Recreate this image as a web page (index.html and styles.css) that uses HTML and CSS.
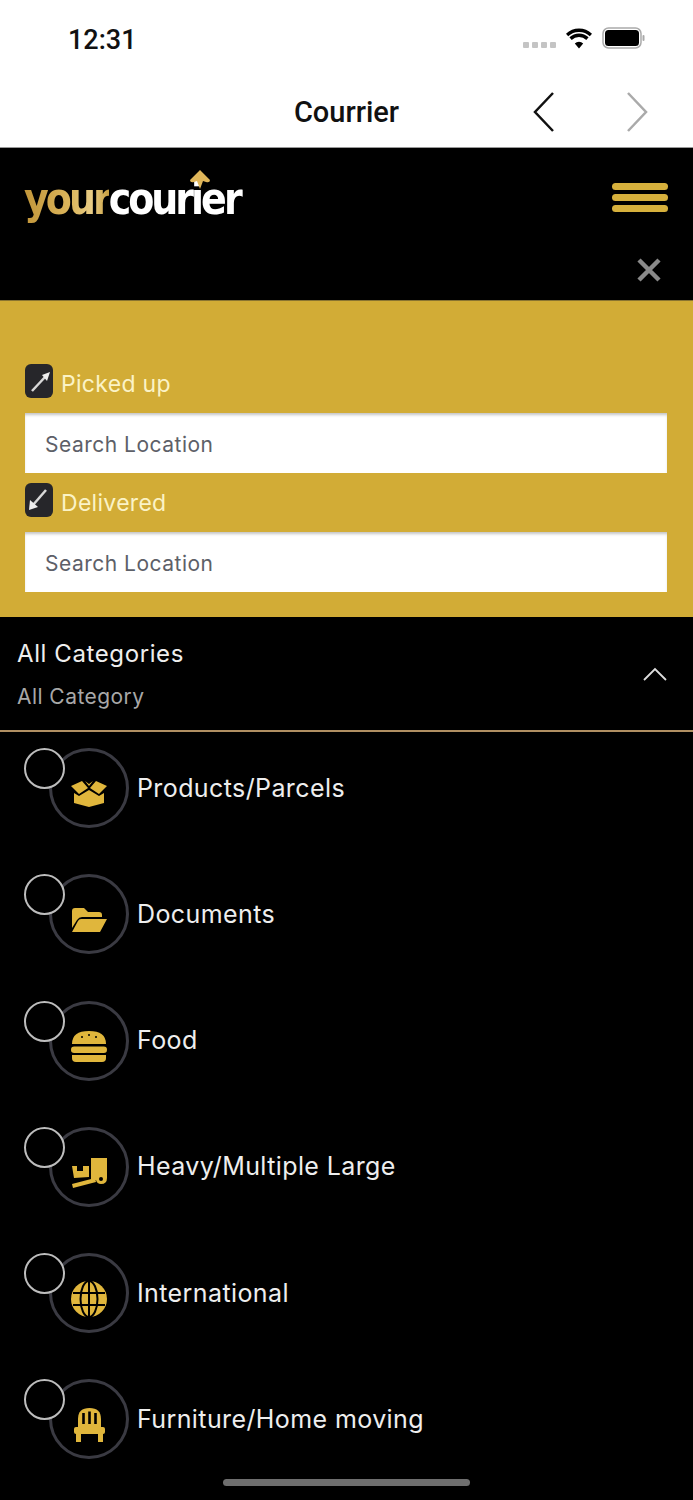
FILE: index.html
```html
<!DOCTYPE html>
<html lang="en">
<head>
<meta charset="utf-8">
<title>Courrier</title>
<link rel="stylesheet" href="styles.css">
</head>
<body>
<div class="screen">
  <header class="top">
    <div class="status">
      <span class="time">12:31</span>
      <div class="status-icons">
        <span class="signal"><i></i><i></i><i></i><i></i></span>
        <svg class="wifi" viewBox="0 0 28 20"><path d="M14 20l-4.2-5a6 6 0 0 1 8.4 0zM14 8.5a10.500 10.500 0 0 0-7.300 3l-2.300-2.700a14 14 0 0 1 19.200 0l-2.300 2.700a10.500 10.500 0 0 0-7.300-3zM14 3.500a15.500 15.500 0 0 0-10.800 4.300L1 5.200a19 19 0 0 1 26 0l-2.200 2.600A15.500 15.500 0 0 0 14 3.500z"/></svg>
        <svg class="battery" viewBox="0 0 44 22"><rect x="1" y="1" width="38" height="20" rx="5.500" fill="none" stroke="#aaa" stroke-width="1.500"/><rect x="3" y="3" width="34" height="16" rx="3.500" fill="#000"/><rect x="40.500" y="8" width="2" height="6" rx="1" fill="#aaa"/></svg>
      </div>
    </div>
    <nav class="navbar">
      <span class="nav-title">Courrier</span>
      <div class="nav-arrows">
        <svg class="chev" viewBox="0 0 24 42"><path d="M21 2L3 21l18 19" fill="none" stroke="#111" stroke-width="2.500"/></svg>
        <svg class="chev" viewBox="0 0 24 42"><path d="M3 2l18 19L3 40" fill="none" stroke="#aaa" stroke-width="2.500"/></svg>
      </div>
    </nav>
  </header>

  <section class="brand">
    <div class="brand-row">
      <div class="logo">
        <span class="logo-text"><span class="logo-gold">your</span><span class="logo-white">courier</span></span>
        <svg class="logo-arrow" viewBox="0 0 22 20"><path d="M11 0l10 10q0 3-4 2l-3-1-3 8-3-8-3 1q-4 1-4-2z"/></svg>
      </div>
      <div class="burger"><i></i><i></i><i></i></div>
    </div>
    <div class="close-row">
      <svg class="close" viewBox="0 0 24 24"><path d="M2 2l20 20M22 2L2 22" stroke="#8a8a8a" stroke-width="4.500" fill="none"/></svg>
    </div>
  </section>

  <section class="search">
    <div class="label-row">
      <span class="tag"><svg viewBox="0 0 28 34"><path d="M7 27L21 12" stroke="#d8d8d8" stroke-width="2.500" fill="none"/><path d="M25 8l-8 3 5 6z" fill="#eee"/></svg></span>
      <span class="label">Picked up</span>
    </div>
    <input class="field" type="text" placeholder="Search Location">
    <div class="label-row">
      <span class="tag"><svg viewBox="0 0 28 34"><path d="M21 7L8 22" stroke="#d8d8d8" stroke-width="2.500" fill="none"/><path d="M4 27l1-10 8 7z" fill="#eee"/></svg></span>
      <span class="label">Delivered</span>
    </div>
    <input class="field" type="text" placeholder="Search Location">
  </section>

  <section class="cats">
    <div class="cats-head">
      <div>
        <div class="cats-title">All Categories</div>
        <div class="cats-sub">All Category</div>
      </div>
      <svg class="cats-chev" viewBox="0 0 24 14"><path d="M1 13L12 2l11 11" fill="none" stroke="#ddd" stroke-width="1.800"/></svg>
    </div>
    <ul class="cat-list">
      <li class="cat">
        <span class="check"></span>
        <span class="disc"><svg viewBox="0 0 36 36"><path d="M0 10l11-5 6 7-9 6zM36 10L25 5l-6 7 9 6zM14 5l4 3 4-3-4 5z"/><path d="M3 17l5 3 10-6 10 6 5-3v10l-15 4-15-4z"/></svg></span>
        <span class="cat-name">Products/Parcels</span>
      </li>
      <li class="cat">
        <span class="check"></span>
        <span class="disc"><svg viewBox="0 0 36 36"><path d="M1 9q0-3 3-3h9l4 4h11q3 0 3 3v2H11q-3 0-5 3l-5 8z"/><path d="M10 17h26l-7 13H1l6-11q1-2 3-2z"/></svg></span>
        <span class="cat-name">Documents</span>
      </li>
      <li class="cat">
        <span class="check"></span>
        <span class="disc"><svg viewBox="0 0 36 36"><path d="M1 16Q1 3 18 3t17 13z"/><rect x="0" y="18.500" width="36" height="6.500" rx="3.200"/><path d="M1 27h34v3q0 4-4 4H5q-4 0-4-4z"/><circle cx="11" cy="9" r="1" class="hole"/><circle cx="18" cy="7" r="1" class="hole"/><circle cx="25" cy="9" r="1" class="hole"/></svg></span>
        <span class="cat-name">Food</span>
      </li>
      <li class="cat">
        <span class="check"></span>
        <span class="disc"><svg viewBox="0 0 36 36"><path d="M20 4h16v20q0 6-6 6-4 0-5-4l-5 1z"/><circle cx="30" cy="25" r="2" class="hole"/><path d="M1 12h5v5h6v-5h6v11l-15 1z"/><path d="M1 30l23-6 1 4-23 6z"/></svg></span>
        <span class="cat-name">Heavy/Multiple Large</span>
      </li>
      <li class="cat">
        <span class="check"></span>
        <span class="disc"><svg viewBox="0 0 36 36"><circle cx="18" cy="18" r="18"/><g class="lines"><ellipse cx="18" cy="18" rx="8.500" ry="18"/><path d="M18 0v36M2 12h32M2 24h32"/></g></svg></span>
        <span class="cat-name">International</span>
      </li>
      <li class="cat">
        <span class="check"></span>
        <span class="disc"><svg viewBox="0 0 36 36"><path d="M7 20v-8Q7 1 18.500 1T30 12v8z"/><g class="slats"><path d="M12.500 6v11M18.500 4.500V17M24.500 6v11"/></g><rect x="3" y="20" width="31" height="7" rx="2"/><rect x="5" y="26" width="5" height="9"/><rect x="27" y="26" width="5" height="9"/></svg></span>
        <span class="cat-name">Furniture/Home moving</span>
      </li>
    </ul>
  </section>
  <div class="home-bar"></div>
</div>
</body>
</html>
```
FILE: styles.css
```css
* { box-sizing: border-box; }
html, body { margin: 0; padding: 0; background: #000; }
.screen {
  position: relative;
  width: 693px;
  height: 1500px;
  overflow: hidden;
  background: #000;
  font-family: "Inter", "Noto Sans", sans-serif;
}
.top { background: #fff; height: 148px; border-bottom: 1px solid #999; }
.status {
  height: 73px;
  padding: 21px 47px 0 68px;
  display: flex;
  justify-content: space-between;
  align-items: flex-start;
}
.time {
  font: 500 27px/38px "Roboto", sans-serif;
  color: #111;
}
.status-icons { display: flex; align-items: center; gap: 9px; padding-top: 6px; }
.signal { display: flex; gap: 3px; padding-top: 14px; }
.signal i { width: 6px; height: 6px; background: #c4c4c4; border-radius: 1px; }
.wifi { width: 28px; height: 21px; fill: #000; }
.battery { width: 44px; height: 22px; }
.navbar {
  position: relative;
  height: 74px;
  display: flex;
  align-items: center;
  justify-content: center;
  padding-top: 4px;
}
.nav-title { font: 500 29px/32px "Roboto", sans-serif; color: #111; }
.nav-arrows {
  position: absolute;
  right: 44px;
  top: 18px;
  display: flex;
  gap: 69px;
}
.chev { width: 24px; height: 42px; display: block; }

.brand { height: 152px; }
.brand-row {
  display: flex;
  justify-content: space-between;
  align-items: flex-start;
  padding: 35px 25px 0 24px;
}
.logo {
  position: relative;
  font: 700 38px/32px "DejaVu Sans", sans-serif;
  letter-spacing: -3px;
}
.logo-text { display: inline-block; transform: scaleY(1.18); }
.logo-gold {
  background: linear-gradient(90deg, #c2963a, #dcb65c 55%, #e8cc86 80%, #c9a040);
  -webkit-background-clip: text;
  background-clip: text;
  color: transparent;
}
.logo-white { color: #fff; }
.logo-arrow {
  position: absolute;
  left: 165px;
  top: -13px;
  width: 22px;
  height: 20px;
  fill: #e0b65a;
}
.burger { display: flex; flex-direction: column; gap: 4px; }
.burger i { display: block; width: 56px; height: 7px; border-radius: 4px; background: #d6b03c; }
.close-row { display: flex; justify-content: flex-end; padding: 43px 32px 0 0; }
.close { width: 24px; height: 24px; display: block; }

.search {
  height: 317px;
  background: #d2ac36;
  padding: 63px 26px 0 25px;
  border-top: 1px solid #8a7430;
}
.label-row { display: flex; align-items: center; gap: 8px; height: 34px; margin-bottom: 15px; }
.tag {
  width: 28px;
  height: 34px;
  border-radius: 6px;
  background: #26262a;
  display: block;
}
.tag svg { display: block; width: 28px; height: 34px; }
.label { font-size: 23px; letter-spacing: 0.300px; color: #fbf3c6; padding-top: 5px; }
.field {
  display: block;
  width: 100%;
  height: 60px;
  margin: 0 0 10px;
  padding: 2px 20px 0;
  border: 0;
  box-shadow: inset 0 3px 3px -1px #c4c4c4;
  background: #fff;
  font: 400 21px "Inter", sans-serif;
  letter-spacing: 0.500px;
  border-radius: 0;
}
.field::placeholder { color: #5d6068; opacity: 1; }

.cats-head {
  height: 115px;
  padding: 18px 26px 0 17px;
  border-bottom: 2px solid #b08f62;
  display: flex;
  justify-content: space-between;
  align-items: flex-start;
}
.cats-title { font-size: 24px; letter-spacing: 0.600px; line-height: 38px; color: #eee; }
.cats-sub { font-size: 21px; letter-spacing: 0.450px; line-height: 28px; margin-top: 10px; color: #a8a8a8; }
.cats-chev { width: 24px; height: 14px; margin-top: 32px; }
.cat-list { list-style: none; margin: 0; padding: 16px 0 0 49px; }
.cat {
  position: relative;
  display: flex;
  align-items: center;
  gap: 8px;
  height: 80px;
  margin-bottom: 46.300px;
}
.check {
  position: absolute;
  left: -25px;
  top: 0;
  width: 41px;
  height: 41px;
  border-radius: 50%;
  border: 2px solid #bdbdbd;
  background: #000;
}
.disc {
  width: 80px;
  height: 80px;
  border-radius: 50%;
  border: 3.500px solid #3a3a42;
  display: flex;
  align-items: center;
  justify-content: center;
  padding-top: 11px;
}
.disc svg { width: 36px; height: 36px; fill: #e0b63c; display: block; }
.disc .hole { fill: #000; }
.disc .lines { fill: none; stroke: #000; stroke-width: 2; }
.disc .slats { fill: none; stroke: #000; stroke-width: 2.600; }
.cat-name { font-size: 25px; letter-spacing: 0.400px; color: #eee; padding-bottom: 1px; }
.home-bar {
  position: absolute;
  left: 223px;
  bottom: 14px;
  width: 247px;
  height: 7px;
  border-radius: 4px;
  background: #6e6e6e;
}
```
